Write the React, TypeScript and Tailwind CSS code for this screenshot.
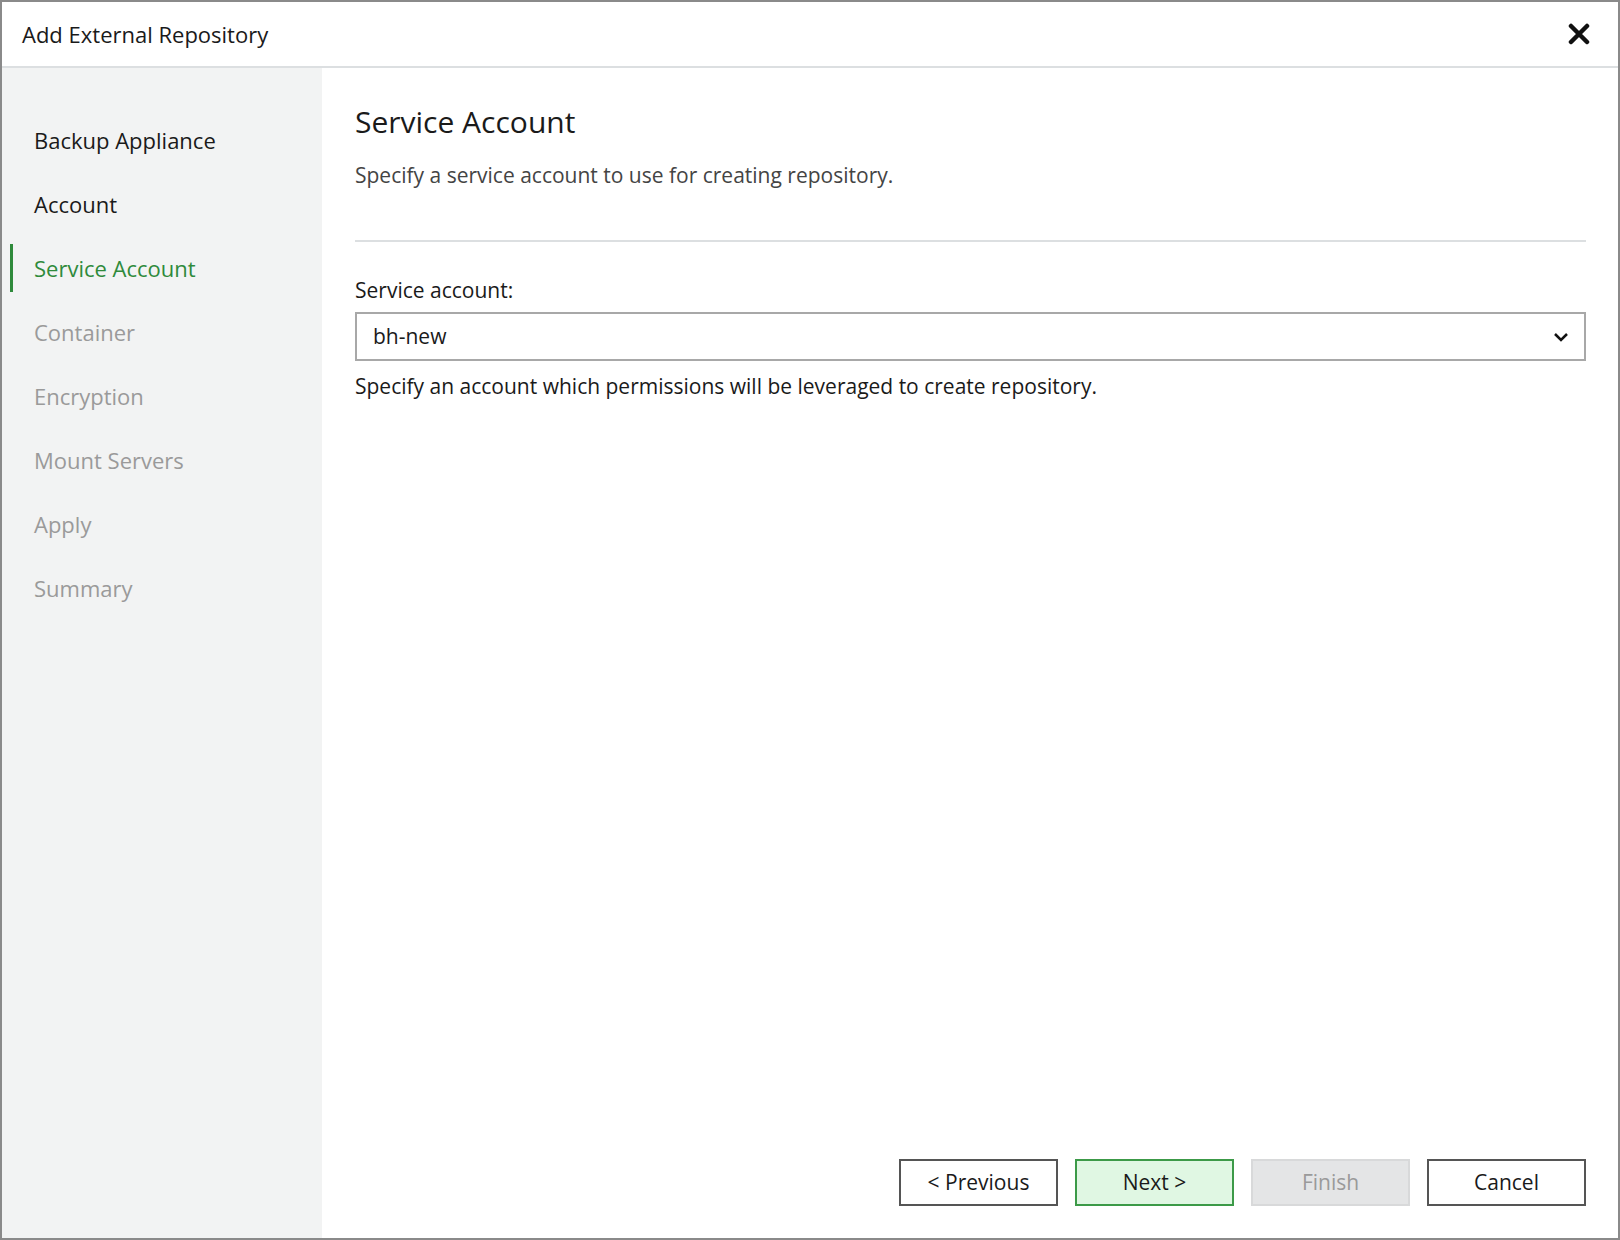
export default function App() {
  const items = [
    { t: "Backup Appliance", s: "done" },
    { t: "Account", s: "done" },
    { t: "Service Account", s: "active" },
    { t: "Container", s: "" },
    { t: "Encryption", s: "" },
    { t: "Mount Servers", s: "" },
    { t: "Apply", s: "" },
    { t: "Summary", s: "" },
  ];
  return (
    <div className="w-[1620px] h-[1240px] bg-white border-2 border-[#8a8a8a] flex flex-col text-[#1a1a1a]" style={{ fontFamily: '"Open Sans", "Noto Sans", sans-serif' }}>
      <div className="h-[66px] border-b-2 border-[#dcdfe1] flex items-center justify-between pl-[20px] pr-[28px] shrink-0">
        <span className="text-[22px]">Add External Repository</span>
        <svg width="22" height="22" viewBox="0 0 22 22"><path d="M3 3 L19 19 M19 3 L3 19" stroke="#111" strokeWidth="4.5" strokeLinecap="round" /></svg>
      </div>
      <div className="flex flex-1 min-h-0">
        <div className="w-[320px] bg-[#f2f3f3] pt-[40px] flex flex-col shrink-0">
          {items.map((i) => (
            <div key={i.t} className={"h-[64px] flex items-center relative pl-[32px] text-[22px] " + (i.s === "active" ? "text-[#2f8a3b]" : i.s === "done" ? "text-[#1a1a1a]" : "text-[#9a9a9a]")}>
              {i.s === "active" && <div className="absolute left-[8px] top-[8px] bottom-[8px] w-[3px] bg-[#2f8a3b]" />}
              {i.t}
            </div>
          ))}
        </div>
        <div className="flex-1 flex flex-col pl-[33px] pr-[32px] pt-[34px] pb-[32px]">
          <div className="text-[30px] leading-[40px]">Service Account</div>
          <div className="text-[21px] text-[#444] mt-[18px]">Specify a service account to use for creating repository.</div>
          <div className="h-[2px] bg-[#dcdfe1] mt-[48px]" />
          <div className="text-[21px] mt-[33px]">Service account:</div>
          <div className="mt-[6px] h-[49px] border-2 border-[#a8a8a8] flex items-center justify-between pl-[16px] pr-[14px] text-[21px]">
            <span>bh-new</span>
            <svg width="18" height="12" viewBox="0 0 18 12"><path d="M3 3 L9 9 L15 3" fill="none" stroke="#111" strokeWidth="2.5" /></svg>
          </div>
          <div className="text-[21px] mt-[10px]">Specify an account which permissions will be leveraged to create repository.</div>
          <div className="flex-1" />
          <div className="flex justify-end gap-[17px] text-[21px]">
            <button className="w-[159px] h-[47px] border-2 border-[#555] bg-white">&lt; Previous</button>
            <button className="w-[159px] h-[47px] border-2 border-[#3c9a48] bg-[#e0f7e3]">Next &gt;</button>
            <button className="w-[159px] h-[47px] border-2 border-[#d8d9da] bg-[#e4e5e6] text-[#9a9a9a]">Finish</button>
            <button className="w-[159px] h-[47px] border-2 border-[#555] bg-white">Cancel</button>
          </div>
        </div>
      </div>
    </div>
  );
}
